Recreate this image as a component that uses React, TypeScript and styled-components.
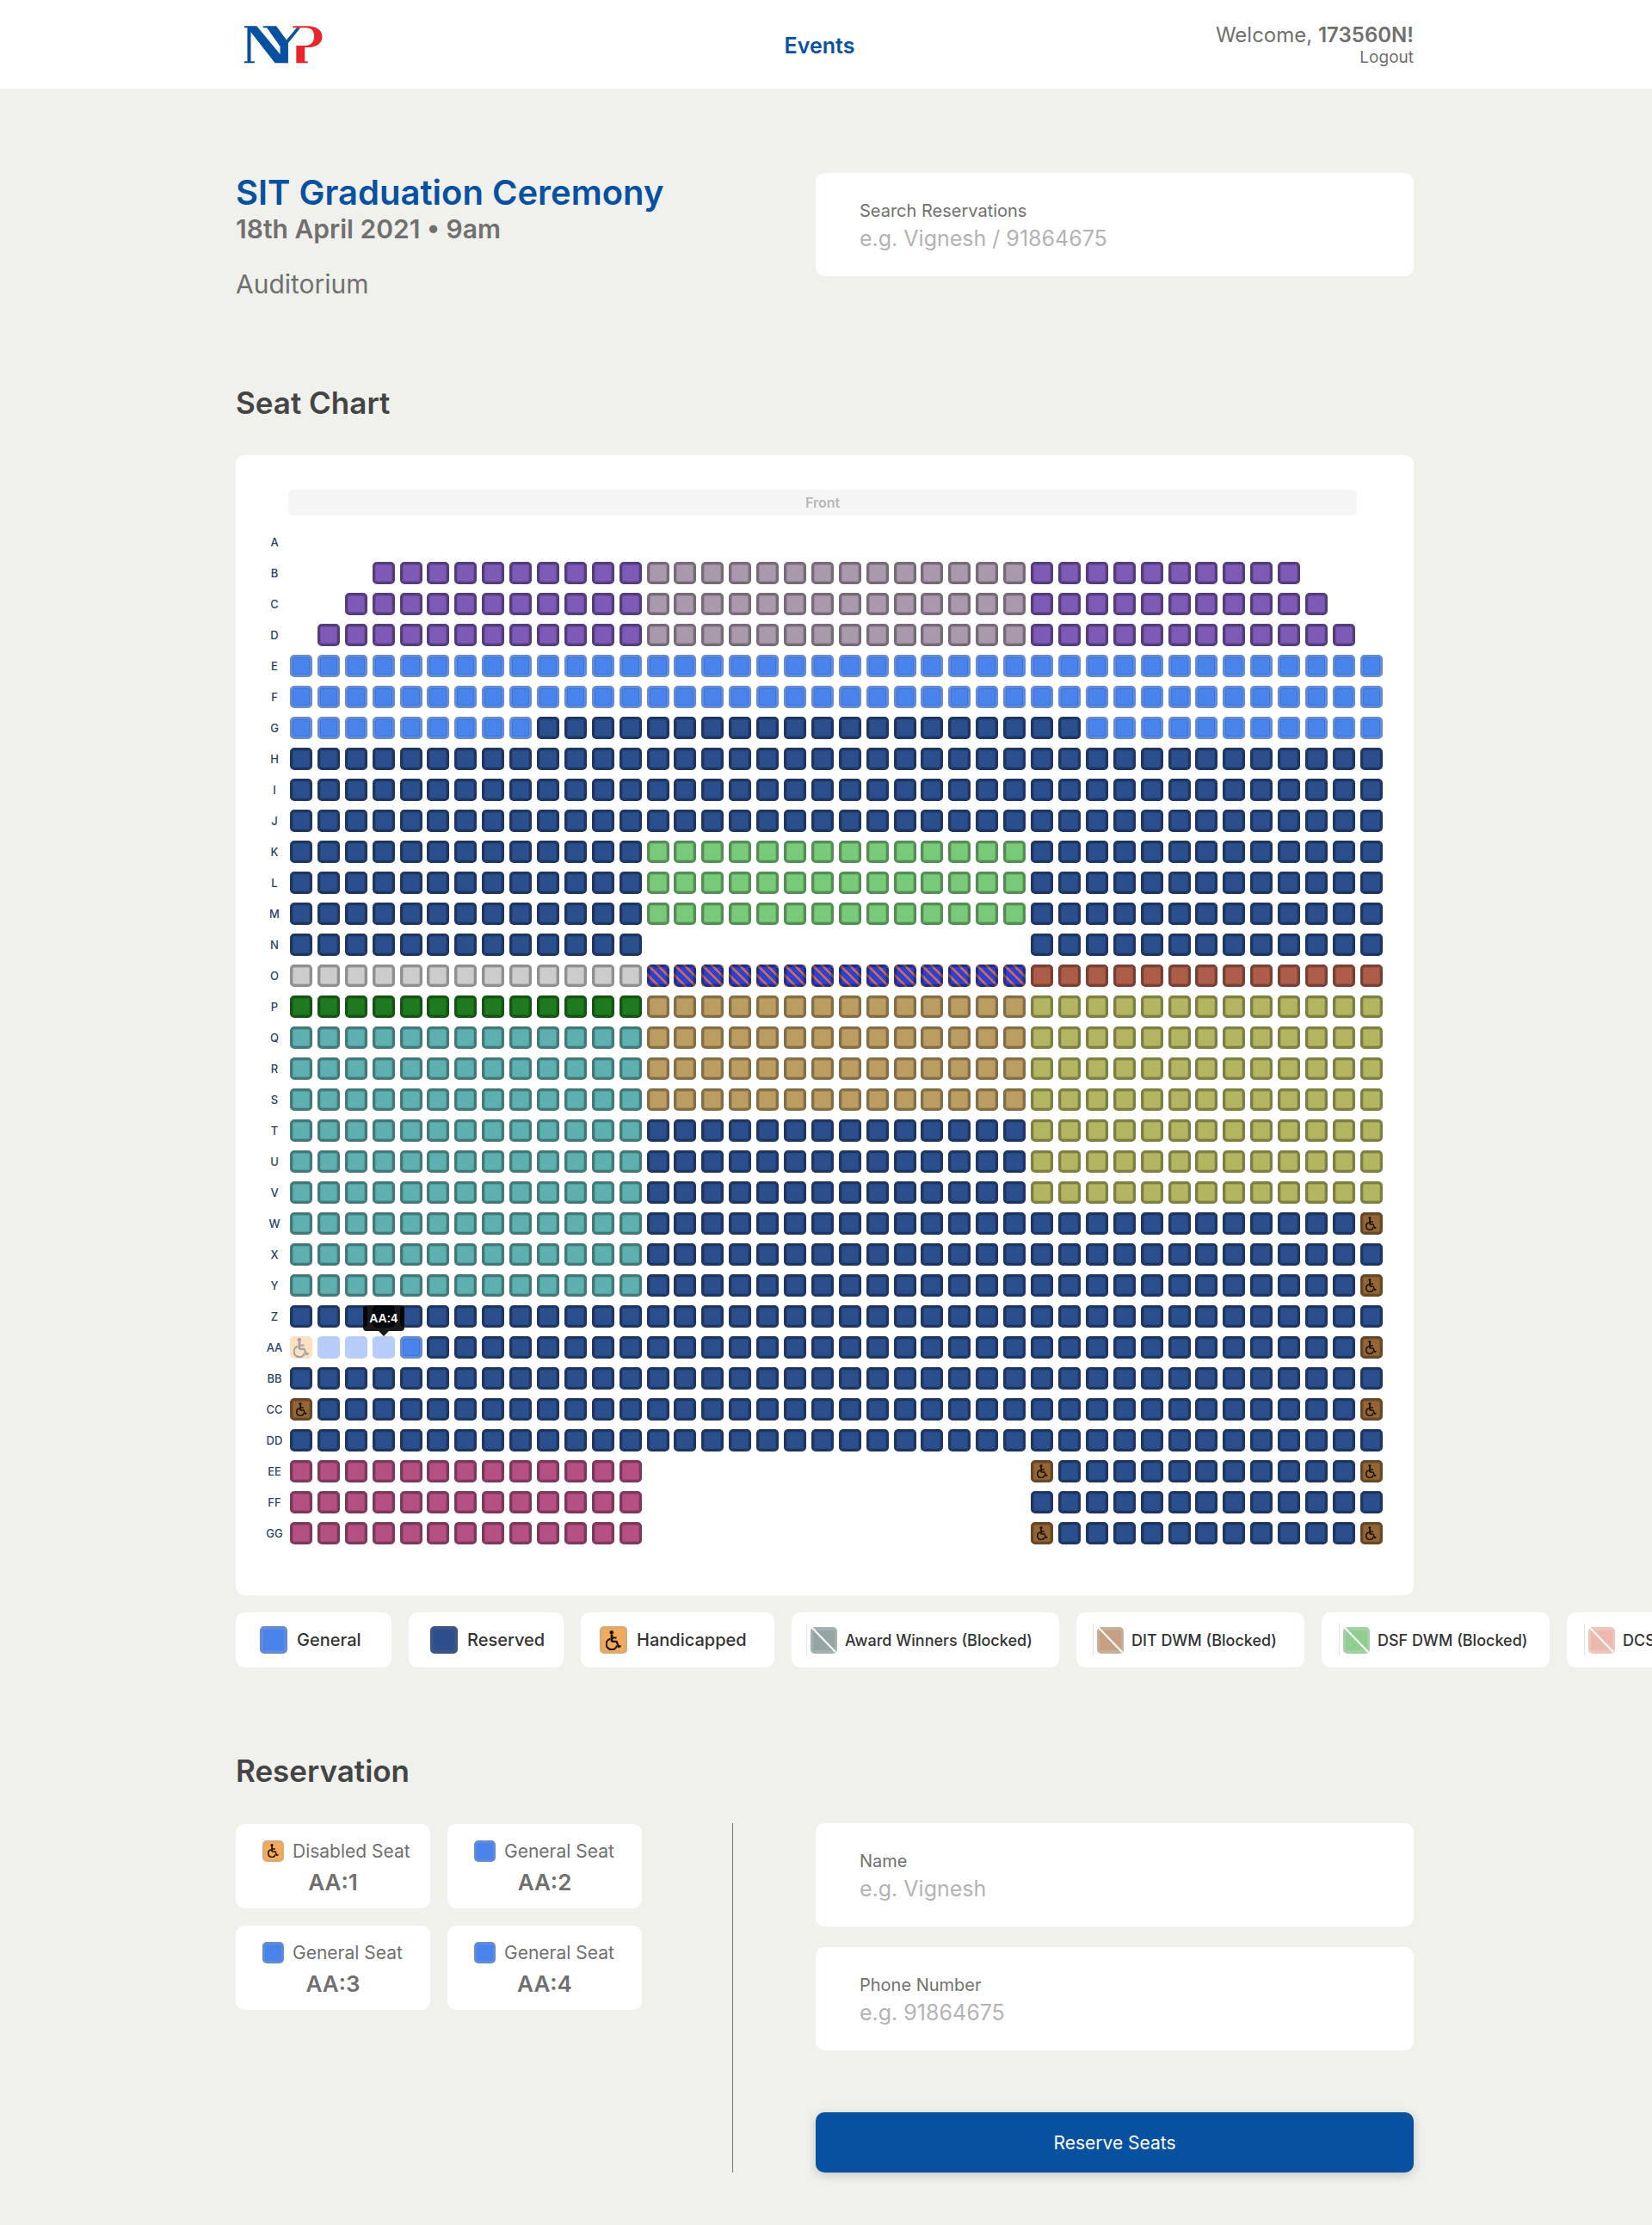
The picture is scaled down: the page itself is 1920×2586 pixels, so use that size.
import React from "react";
import styled, { createGlobalStyle, css } from "styled-components";

const GlobalStyle = createGlobalStyle`
  *, *::before, *::after { box-sizing: border-box; }
  body {
    margin: 0;
    background: #f0f0ec;
    color: #707070;
    font-family: Inter, "Liberation Sans", sans-serif;
    overflow-x: hidden;
  }
  h1, h2, p { margin: 0; }
`;

type Tone = { fill: string; edge: string };

const TONES: Record<string, Tone> = {
  p: { fill: "#7c5ab5", edge: "#553d7c" },
  m: { fill: "#aa98ac", edge: "#776a78" },
  g: { fill: "#4983ec", edge: "#648bd5" },
  r: { fill: "#2b4f8d", edge: "#1e3661" },
  k: { fill: "#78ca79", edge: "#548d55" },
  y: { fill: "#cccccc", edge: "#8f8f8f" },
  s: {
    fill: "repeating-linear-gradient(45deg, #2f40d0 0 1px, #bb6a62 1px 4px, #2f40d0 4px 8px)",
    edge: "rgba(0, 0, 0, 0.3)",
  },
  d: { fill: "#1f7a1f", edge: "#155415" },
  t: { fill: "#5eafaf", edge: "#427a7a" },
  b: { fill: "#bb9d62", edge: "#836e45" },
  o: { fill: "#b4b560", edge: "#7e7f43" },
  e: { fill: "#ad5d4a", edge: "#794134" },
  i: { fill: "#b55082", edge: "#7e385b" },
  h: { fill: "#946635", edge: "#684726" },
  a: { fill: "#f5aa58", edge: "#dfaa71" },
  S: { fill: "#b7ccf8", edge: "#b7ccf8" },
  H: { fill: "#fde0c2", edge: "#fde0c2" },
};

const run = (seat: string, count: number) => seat.repeat(count);
const block = (left: string, middle: string, right: string) =>
  run(left, 13) + run(middle, 14) + run(right, 13);

const ROWS: [string, string][] = [
  ["A", run(".", 40)],
  ["B", run(".", 3) + run("p", 10) + run("m", 14) + run("p", 10) + run(".", 3)],
  ["C", run(".", 2) + run("p", 11) + run("m", 14) + run("p", 11) + run(".", 2)],
  ["D", run(".", 1) + run("p", 12) + run("m", 14) + run("p", 12) + run(".", 1)],
  ["E", run("g", 40)],
  ["F", run("g", 40)],
  ["G", run("g", 9) + run("r", 20) + run("g", 11)],
  ["H", run("r", 40)],
  ["I", run("r", 40)],
  ["J", run("r", 40)],
  ["K", block("r", "k", "r")],
  ["L", block("r", "k", "r")],
  ["M", block("r", "k", "r")],
  ["N", block("r", ".", "r")],
  ["O", block("y", "s", "e")],
  ["P", block("d", "b", "o")],
  ["Q", block("t", "b", "o")],
  ["R", block("t", "b", "o")],
  ["S", block("t", "b", "o")],
  ["T", block("t", "r", "o")],
  ["U", block("t", "r", "o")],
  ["V", block("t", "r", "o")],
  ["W", run("t", 13) + run("r", 26) + "h"],
  ["X", block("t", "r", "r")],
  ["Y", run("t", 13) + run("r", 26) + "h"],
  ["Z", run("r", 40)],
  ["AA", "HSSSg" + run("r", 34) + "h"],
  ["BB", run("r", 40)],
  ["CC", "h" + run("r", 38) + "h"],
  ["DD", run("r", 40)],
  ["EE", run("i", 13) + run(".", 14) + "h" + run("r", 11) + "h"],
  ["FF", block("i", ".", "r")],
  ["GG", run("i", 13) + run(".", 14) + "h" + run("r", 11) + "h"],
];

const ACTIVE_SEAT = "AA:4";

const NavBar = styled.header`
  background: #fff;
`;

const Container = styled.div`
  width: 100%;
  max-width: 1372px;
  margin: 0 auto;
  padding-right: 3px;
`;

const NavGrid = styled(Container)`
  display: grid;
  grid-template-columns: 1fr auto 1fr;
  align-items: center;
  height: 103px;
`;

const Brand = styled.a`
  display: block;
  width: 91px;
  height: 44px;
  margin-left: 10px;
`;

const NavLink = styled.a`
  margin-right: 12px;
  padding-top: 3px;
  color: #0851a1;
  font-size: 25px;
  font-weight: 600;
  line-height: 30px;
  text-decoration: none;
`;

const Account = styled.div`
  display: flex;
  flex-direction: column;
  align-items: flex-end;
  padding-top: 2px;
`;

const Welcome = styled.p`
  font-size: 24px;
  line-height: 28px;
  strong { font-weight: 600; }
`;

const Logout = styled.a`
  color: inherit;
  font-size: 19px;
  line-height: 24px;
  text-decoration: none;
`;

const Page = styled(Container).attrs({ as: "main" })`
  padding-top: 98px;
  padding-bottom: 61px;
`;

const Split = styled.section`
  display: grid;
  grid-template-columns: minmax(0, 578fr) minmax(0, 695fr);
  column-gap: 96px;
  align-items: start;
`;

const EventTitle = styled.h1`
  color: #0851a1;
  font-size: 40px;
  font-weight: 600;
  line-height: 46px;
`;

const EventDate = styled.p`
  font-size: 30px;
  font-weight: 600;
  line-height: 38px;
`;

const Venue = styled.p`
  margin-top: 27px;
  font-size: 30px;
  line-height: 36px;
`;

const FieldCard = styled.label`
  display: flex;
  flex-direction: column;
  height: 120px;
  padding: 32px 51px 0;
  border-radius: 10px;
  background: #fff;
`;

const FieldLabel = styled.span`
  font-size: 20px;
  line-height: 24px;
`;

const FieldInput = styled.input`
  width: 100%;
  height: 32px;
  margin-top: 4px;
  padding: 0;
  border: 0;
  outline: 0;
  background: transparent;
  color: #707070;
  font: inherit;
  font-size: 25px;
  &::placeholder { color: #b3b3b3; opacity: 1; }
`;

const SectionTitle = styled.h2`
  margin: 98px 0 39px;
  color: #444;
  font-size: 35px;
  font-weight: 600;
  line-height: 44px;
`;

const ChartCard = styled.div`
  padding: 40px 36px 59px 29px;
  border-radius: 10px;
  background: #fff;
`;

const FrontBar = styled.div`
  margin: 0 30px 18px 32px;
  border-radius: 5px;
  background: #f5f5f5;
  color: #b8b8b8;
  font-size: 16px;
  font-weight: 600;
  line-height: 30px;
  text-align: center;
`;

const SeatRows = styled.div`
  display: flex;
  flex-direction: column;
  gap: 10px;
`;

const SeatRow = styled.div`
  display: grid;
  grid-template-columns: 32px minmax(0, 1fr);
  column-gap: 2px;
  align-items: center;
  height: 26px;
`;

const RowLabel = styled.span`
  color: #2b3f66;
  font-size: 13px;
  font-weight: 500;
  line-height: 26px;
  text-align: center;
`;

const SeatLine = styled.div`
  display: flex;
  justify-content: space-between;
`;

const seatFace = css<{ $tone: Tone }>`
  display: flex;
  align-items: center;
  justify-content: center;
  flex: none;
  padding: 0;
  background: ${(p) => p.$tone.fill};
  background-origin: border-box;
  color: #1c1206;
`;

const Seat = styled.button<{ $tone: Tone; $selected: boolean }>`
  ${seatFace}
  position: relative;
  width: 26px;
  height: 26px;
  border: 3px solid ${(p) => p.$tone.edge};
  border-radius: 5px;
  box-shadow: inset 0 0 0 1px ${(p) => (p.$selected ? "transparent" : "rgba(0, 0, 0, 0.1)")};
  color: ${(p) => (p.$selected ? "#a3a3a3" : "#1c1206")};
  cursor: pointer;
`;

const Aisle = styled.span`
  flex: none;
  width: 26px;
  height: 26px;
`;

const Tooltip = styled.span`
  position: absolute;
  bottom: 29px;
  left: 50%;
  z-index: 1;
  width: 48px;
  height: 30px;
  border-radius: 4px;
  background: rgba(0, 0, 0, 0.9);
  color: #fff;
  font-size: 14px;
  font-weight: 600;
  line-height: 30px;
  text-align: center;
  transform: translateX(-50%);
  &::after {
    content: "";
    position: absolute;
    top: 100%;
    left: 50%;
    border: 6px solid transparent;
    border-top-color: rgba(0, 0, 0, 0.9);
    border-bottom: 0;
    transform: translateX(-50%);
  }
`;

const Legend = styled.ul`
  display: flex;
  gap: 20px;
  margin: 20px calc(50% - 50vw - 2px) 0 0;
  padding: 0;
  overflow-x: auto;
  list-style: none;
  scrollbar-width: none;
`;

const LegendItem = styled.li<{ $width: number; $pad: number; $small?: boolean }>`
  display: flex;
  align-items: center;
  flex: none;
  gap: ${(p) => (p.$small ? 9 : 11)}px;
  width: ${(p) => p.$width}px;
  height: 64px;
  padding-left: ${(p) => p.$pad}px;
  border-radius: 10px;
  background: #fff;
  color: #333;
  font-size: ${(p) => (p.$small ? 18 : 20)}px;
  font-weight: 500;
  white-space: nowrap;
`;

const Swatch = styled.span<{ $tone: Tone; $size: number }>`
  ${seatFace}
  width: ${(p) => p.$size}px;
  height: ${(p) => p.$size}px;
  border: ${(p) => (p.$size > 28 ? 4 : 3)}px solid ${(p) => p.$tone.edge};
  border-radius: 5px;
`;

const BlockedMark = styled.span`
  display: flex;
  align-items: center;
  height: 38px;
  padding-left: 4px;
  border-left: 1px solid #e4e4e4;
`;

const Selection = styled.div`
  align-self: stretch;
  border-right: 1px solid #777;
`;

const SelectionGrid = styled.ul`
  display: grid;
  grid-template-columns: repeat(2, 226px);
  gap: 20px;
  margin: 0;
  padding: 1px 0 0;
  list-style: none;
`;

const SelectedCard = styled.li`
  height: 98px;
  padding-top: 18px;
  border-radius: 10px;
  background: #fff;
`;

const SeatKind = styled.div`
  display: flex;
  align-items: center;
  gap: 10px;
  height: 26px;
  padding-left: 31px;
  font-size: 21px;
  white-space: nowrap;
`;

const SeatCode = styled.p`
  margin-top: 9px;
  font-size: 26px;
  font-weight: 600;
  line-height: 30px;
  text-align: center;
`;

const Form = styled.form`
  display: flex;
  flex-direction: column;
  gap: 24px;
`;

const SubmitButton = styled.button`
  height: 70px;
  margin-top: 48px;
  border: 0;
  border-radius: 10px;
  background: #0851a1;
  box-shadow: 0 3px 12px rgba(0, 0, 0, 0.18);
  color: #fff;
  font: inherit;
  font-size: 21px;
  cursor: pointer;
`;

const Logo = () => (
  <svg viewBox="0 0 92 44" width="91" height="44" role="img" aria-label="NYP">
    <path
      fill="#0851a1"
      d="M0 0H14.5L42 33V24L26.5 2H22V0H37.5L49.5 16.5L61.5 2H66L51.5 20V43.5H36L7.6 7V41.5H12V43.5H0V41.5H3.5V2H0Z"
    />
    <path
      fill="#e8252b"
      d="M57 0H74C85 0 91.500 5 91.500 12.500C91.500 20 85 25 76 25H71V41.500H74.500V43.500H61V23H72C79 23 82 18 82 12C82 5.500 79 2 72 2H57Z"
    />
  </svg>
);

const WheelchairIcon = ({ height }: { height: number }) => (
  <svg
    viewBox="0 0 18 23"
    height={height}
    width={Math.round((height * 18) / 23)}
    fill="none"
    stroke="currentColor"
    strokeWidth="2.2"
    aria-hidden="true"
  >
    <circle cx="6.8" cy="2.3" r="2.3" fill="currentColor" stroke="none" />
    <path d="M7 4.500V13" strokeWidth="2.800" />
    <path d="M7 8.500H12.500M7 12.800H12.500L15.200 19L17.600 18" />
    <path d="M5.300 9.800A6.300 6.300 0 1 0 13 17.500" />
  </svg>
);

const BLOCKED_LEGEND = [
  { text: "Award Winners (Blocked)", fill: "#95a5a4", edge: "#a5b1b0", width: 311, pad: 17 },
  { text: "DIT DWM (Blocked)", fill: "#c6a084", edge: "#c9ae99", width: 265, pad: 19 },
  { text: "DSF DWM (Blocked)", fill: "#90cd91", edge: "#a5cfa5", width: 265, pad: 20 },
  { text: "DCS DWM (Blocked)", fill: "#edb9ae", edge: "#efc5bc", width: 265, pad: 20 },
];

const SELECTED = [
  { kind: "Disabled Seat", code: "AA:1", tone: "a" },
  { kind: "General Seat", code: "AA:2", tone: "g" },
  { kind: "General Seat", code: "AA:3", tone: "g" },
  { kind: "General Seat", code: "AA:4", tone: "g" },
];

const BlockedSwatch = ({ tone }: { tone: Tone }) => (
  <BlockedMark>
    <svg width="31" height="31" viewBox="0 0 31 31" aria-hidden="true">
      <rect width="31" height="31" rx="5" fill={tone.edge} />
      <rect x="3" y="4" width="25" height="23" fill={tone.fill} />
      <path d="M2 1L29 29" stroke="#fff" strokeWidth="2" />
    </svg>
  </BlockedMark>
);

const SeatChart = () => (
  <ChartCard>
    <FrontBar>Front</FrontBar>
    <SeatRows>
      {ROWS.map(([name, seats]) => (
        <SeatRow key={name}>
          <RowLabel>{name}</RowLabel>
          <SeatLine>
            {seats.split("").map((kind, index) => {
              const code = `${name}:${index + 1}`;
              if (kind === ".") return <Aisle key={code} />;
              return (
                <Seat
                  key={code}
                  type="button"
                  aria-label={code}
                  $tone={TONES[kind]}
                  $selected={kind === "S" || kind === "H"}
                >
                  {kind === "h" && <WheelchairIcon height={16} />}
                  {kind === "H" && <WheelchairIcon height={23} />}
                  {code === ACTIVE_SEAT && <Tooltip role="tooltip">{code}</Tooltip>}
                </Seat>
              );
            })}
          </SeatLine>
        </SeatRow>
      ))}
    </SeatRows>
  </ChartCard>
);

export default function App() {
  return (
    <>
      <GlobalStyle />
      <NavBar>
        <NavGrid>
          <Brand href="#home">
            <Logo />
          </Brand>
          <NavLink href="#events">Events</NavLink>
          <Account>
            <Welcome>
              Welcome, <strong>173560N!</strong>
            </Welcome>
            <Logout href="#logout">Logout</Logout>
          </Account>
        </NavGrid>
      </NavBar>
      <Page>
        <Split>
          <div>
            <EventTitle>SIT Graduation Ceremony</EventTitle>
            <EventDate>18th April 2021 • 9am</EventDate>
            <Venue>Auditorium</Venue>
          </div>
          <FieldCard>
            <FieldLabel>Search Reservations</FieldLabel>
            <FieldInput type="search" placeholder="e.g. Vignesh / 91864675" />
          </FieldCard>
        </Split>

        <SectionTitle>Seat Chart</SectionTitle>
        <SeatChart />
        <Legend>
          <LegendItem $width={181} $pad={28}>
            <Swatch $tone={TONES.g} $size={32} />
            General
          </LegendItem>
          <LegendItem $width={180} $pad={25}>
            <Swatch $tone={{ fill: "#2b4f8d", edge: "#3d5584" }} $size={32} />
            Reserved
          </LegendItem>
          <LegendItem $width={225} $pad={22}>
            <Swatch $tone={TONES.a} $size={32}>
              <WheelchairIcon height={23} />
            </Swatch>
            Handicapped
          </LegendItem>
          {BLOCKED_LEGEND.map(({ text, fill, edge, width, pad }) => (
            <LegendItem key={text} $width={width} $pad={pad} $small>
              <BlockedSwatch tone={{ fill, edge }} />
              {text}
            </LegendItem>
          ))}
        </Legend>

        <SectionTitle>Reservation</SectionTitle>
        <Split>
          <Selection>
            <SelectionGrid>
              {SELECTED.map(({ kind, code, tone }) => (
                <SelectedCard key={code}>
                  <SeatKind>
                    <Swatch $tone={TONES[tone]} $size={25}>
                      {tone === "a" && <WheelchairIcon height={16} />}
                    </Swatch>
                    {kind}
                  </SeatKind>
                  <SeatCode>{code}</SeatCode>
                </SelectedCard>
              ))}
            </SelectionGrid>
          </Selection>
          <Form>
            <FieldCard>
              <FieldLabel>Name</FieldLabel>
              <FieldInput type="text" placeholder="e.g. Vignesh" />
            </FieldCard>
            <FieldCard>
              <FieldLabel>Phone Number</FieldLabel>
              <FieldInput type="tel" placeholder="e.g. 91864675" />
            </FieldCard>
            <SubmitButton type="button">Reserve Seats</SubmitButton>
          </Form>
        </Split>
      </Page>
    </>
  );
}
